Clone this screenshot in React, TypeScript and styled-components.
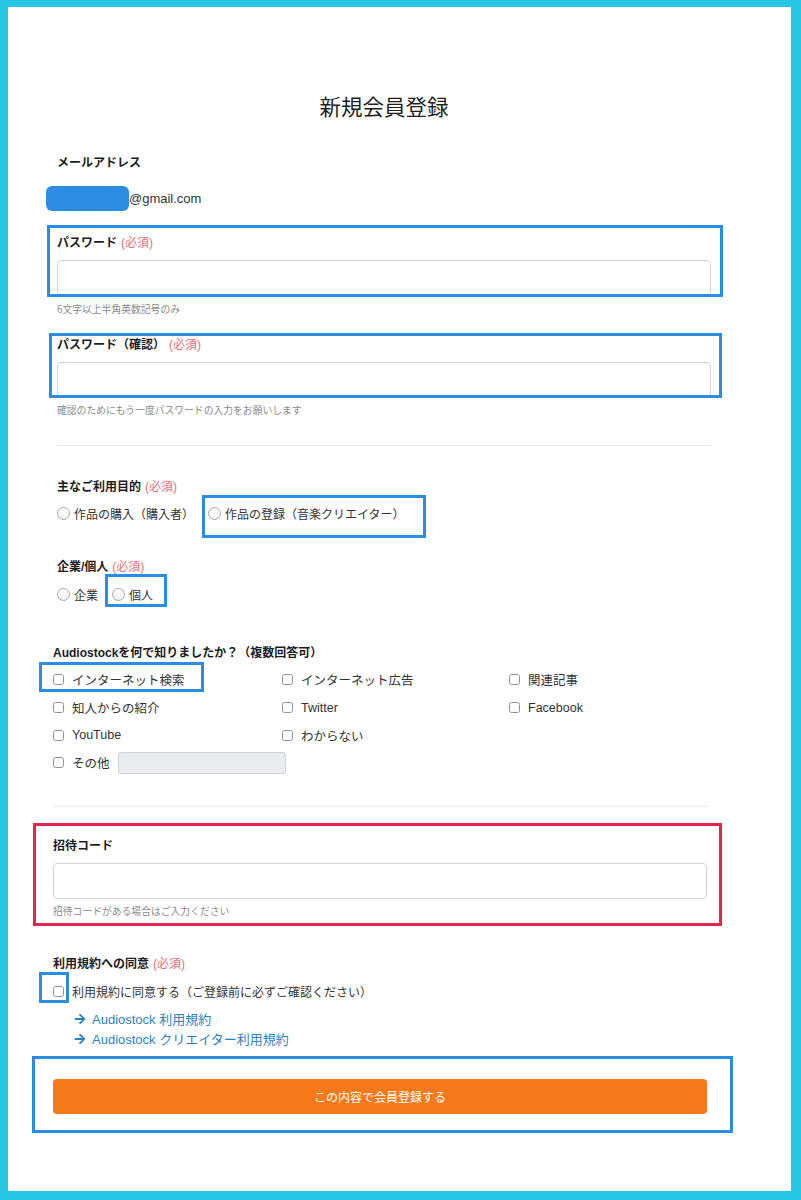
import React from "react";
import styled, { createGlobalStyle } from "styled-components";
import { FaArrowRight } from "react-icons/fa";

const GlobalStyle = createGlobalStyle`
  body {
    margin: 0;
    font-family: "Liberation Sans", "Noto Sans CJK JP", sans-serif;
    color: #333;
  }
`;

const Frame = styled.div`
  position: relative;
  box-sizing: border-box;
  height: 1200px;
  padding: 7px 10px 9px 8px;
  background: #26c5e3;
`;

const Card = styled.div`
  box-sizing: border-box;
  height: 100%;
  padding-top: 84px;
  background: #fff;
  overflow: hidden;
`;

const Column = styled.div<{ $left: number; $width: number }>`
  margin-left: ${(p) => p.$left}px;
  width: ${(p) => p.$width}px;
`;

const Title = styled.h1`
  margin: 0;
  text-align: center;
  font-family: "Noto Sans CJK JP", sans-serif;
  font-size: 21.5px;
  font-weight: 400;
  line-height: 30px;
  color: #1f1f1f;
`;

const Label = styled.div<{ $mt: number }>`
  margin-top: ${(p) => p.$mt}px;
  font-size: 12px;
  font-weight: 700;
  line-height: 18px;
  color: #1c1c1c;
`;

const Required = styled.span`
  margin-left: 4px;
  font-weight: 400;
  color: #e5707b;
`;

const EmailRow = styled.div`
  display: flex;
  align-items: center;
  height: 25px;
  margin-top: 14px;
  font-size: 13px;
  color: #333;
`;

const Redacted = styled.span`
  width: 83px;
  height: 25px;
  margin-left: -11px;
  border-radius: 6px;
  background: #2b8ee2;
`;

const TextInput = styled.input<{ $mt: number }>`
  display: block;
  box-sizing: border-box;
  width: 654px;
  height: 36px;
  margin: ${(p) => p.$mt}px 0 0;
  padding: 0 10px;
  border: 1px solid #d0d5dc;
  border-radius: 4px;
  background: #fff;
  font: inherit;
`;

const Hint = styled.div<{ $mt: number }>`
  margin-top: ${(p) => p.$mt}px;
  font-family: "Noto Sans CJK JP", sans-serif;
  font-size: 9.8px;
  line-height: 14px;
  color: #8a8a8a;
`;

const Divider = styled.div<{ $mt: number }>`
  height: 1px;
  margin-top: ${(p) => p.$mt}px;
  background: #e9e9e9;
`;

const RadioRow = styled.div<{ $mt: number }>`
  display: flex;
  align-items: center;
  height: 20px;
  margin-top: ${(p) => p.$mt}px;
`;

const RadioOption = styled.label`
  display: inline-flex;
  align-items: center;
  gap: 4px;
  margin-right: 14px;
  font-size: 12px;
  color: #333;
`;

const RadioDot = styled.span`
  box-sizing: border-box;
  width: 13px;
  height: 13px;
  border: 1px solid #a9a9a9;
  border-radius: 50%;
  background: linear-gradient(#fff, #f2f2f2);
`;

const CheckGrid = styled.div`
  display: grid;
  grid-template-columns: 229px 227px auto;
  grid-auto-rows: 27.7px;
  margin-top: 4px;
`;

const CheckOption = styled.label<{ $size?: number; $span?: number }>`
  display: flex;
  align-items: center;
  gap: 8px;
  grid-column: span ${(p) => p.$span ?? 1};
  white-space: nowrap;
  font-size: ${(p) => p.$size ?? 12.5}px;
  color: #333;
`;

const CheckBox = styled.span`
  box-sizing: border-box;
  flex: none;
  width: 11px;
  height: 11px;
  border: 1px solid #939393;
  border-radius: 2.5px;
  background: #fff;
`;

const OtherInput = styled.input`
  box-sizing: border-box;
  width: 168px;
  height: 22px;
  margin: 0;
  border: 1px solid #ced4da;
  border-radius: 3px;
  background: #e9ecef;
`;

const TermsRow = styled.div`
  display: flex;
  align-items: center;
  height: 20px;
  margin-top: 9px;
`;

const LinkList = styled.div`
  margin-top: 7px;
`;

const LinkRow = styled.a`
  display: flex;
  align-items: center;
  gap: 6px;
  height: 20px;
  padding-left: 21px;
  font-size: 13px;
  color: #2f7fc2;
  text-decoration: none;
`;

const SubmitButton = styled.button`
  display: block;
  width: 654px;
  height: 35px;
  margin-top: 30px;
  border: none;
  border-radius: 4px;
  background: #f7791a;
  color: #fff;
  font-family: "Noto Sans CJK JP", sans-serif;
  font-size: 12px;
`;

// annotation boxes drawn over the screenshot
const Mark = styled.div<{ $x: number; $y: number; $w: number; $h: number; $red?: boolean }>`
  position: absolute;
  left: ${(p) => p.$x}px;
  top: ${(p) => p.$y}px;
  width: ${(p) => p.$w}px;
  height: ${(p) => p.$h}px;
  box-sizing: border-box;
  border: 3px solid ${(p) => (p.$red ? "#e3264f" : "#2b8ce3")};
  pointer-events: none;
`;

const sources = [
  "インターネット検索",
  "インターネット広告",
  "関連記事",
  "知人からの紹介",
  "Twitter",
  "Facebook",
  "YouTube",
  "わからない",
];

const marks = [
  { x: 47, y: 225, w: 676, h: 72 },
  { x: 49, y: 333, w: 673, h: 65 },
  { x: 202, y: 495, w: 224, h: 43 },
  { x: 105, y: 574, w: 62, h: 33 },
  { x: 39, y: 662, w: 165, h: 30 },
  { x: 33, y: 823, w: 689, h: 103, red: true },
  { x: 39, y: 972, w: 30, h: 31 },
  { x: 32, y: 1056, w: 701, h: 77 },
];

const App = () => {
  return (
    <Frame>
      <GlobalStyle />
      <Card>
        <Column $left={49} $width={654}>
          <Title>新規会員登録</Title>

          <Label $mt={33}>メールアドレス</Label>
          <EmailRow>
            <Redacted />
            @gmail.com
          </EmailRow>

          <Label $mt={23}>
            パスワード<Required>(必須)</Required>
          </Label>
          <TextInput type="password" $mt={8} />
          <Hint $mt={6}>6文字以上半角英数記号のみ</Hint>

          <Label $mt={20}>
            パスワード（確認）<Required>(必須)</Required>
          </Label>
          <TextInput type="password" $mt={8} />
          <Hint $mt={5}>確認のためにもう一度パスワードの入力をお願いします</Hint>

          <Divider $mt={28} />

          <Label $mt={32}>
            主なご利用目的<Required>(必須)</Required>
          </Label>
          <RadioRow $mt={7}>
            <RadioOption>
              <RadioDot />
              作品の購入（購入者）
            </RadioOption>
            <RadioOption>
              <RadioDot />
              作品の登録（音楽クリエイター）
            </RadioOption>
          </RadioRow>

          <Label $mt={35}>
            企業/個人<Required>(必須)</Required>
          </Label>
          <RadioRow $mt={8}>
            <RadioOption>
              <RadioDot />
              企業
            </RadioOption>
            <RadioOption>
              <RadioDot />
              個人
            </RadioOption>
          </RadioRow>
        </Column>

        <Column $left={45} $width={655}>
          <Label $mt={40}>Audiostockを何で知りましたか？（複数回答可）</Label>
          <CheckGrid>
            {sources.map((s) => (
              <CheckOption key={s}>
                <CheckBox />
                {s}
              </CheckOption>
            ))}
            <span />
            <CheckOption $span={2}>
              <CheckBox />
              その他
              <OtherInput disabled />
            </CheckOption>
          </CheckGrid>

          <Divider $mt={29} />

          <Label $mt={30}>招待コード</Label>
          <TextInput type="text" $mt={8} />
          <Hint $mt={5}>招待コードがある場合はご入力ください</Hint>

          <Label $mt={37}>
            利用規約への同意<Required>(必須)</Required>
          </Label>
          <TermsRow>
            <CheckOption $size={12}>
              <CheckBox />
              利用規約に同意する（ご登録前に必ずご確認ください）
            </CheckOption>
          </TermsRow>
          <LinkList>
            <LinkRow href="#">
              <FaArrowRight size={12} />
              Audiostock 利用規約
            </LinkRow>
            <LinkRow href="#">
              <FaArrowRight size={12} />
              Audiostock クリエイター利用規約
            </LinkRow>
          </LinkList>

          <SubmitButton type="button">この内容で会員登録する</SubmitButton>
        </Column>
      </Card>

      {marks.map((m, i) => (
        <Mark key={i} $x={m.x} $y={m.y} $w={m.w} $h={m.h} $red={m.red} />
      ))}
    </Frame>
  );
};

export default App;
